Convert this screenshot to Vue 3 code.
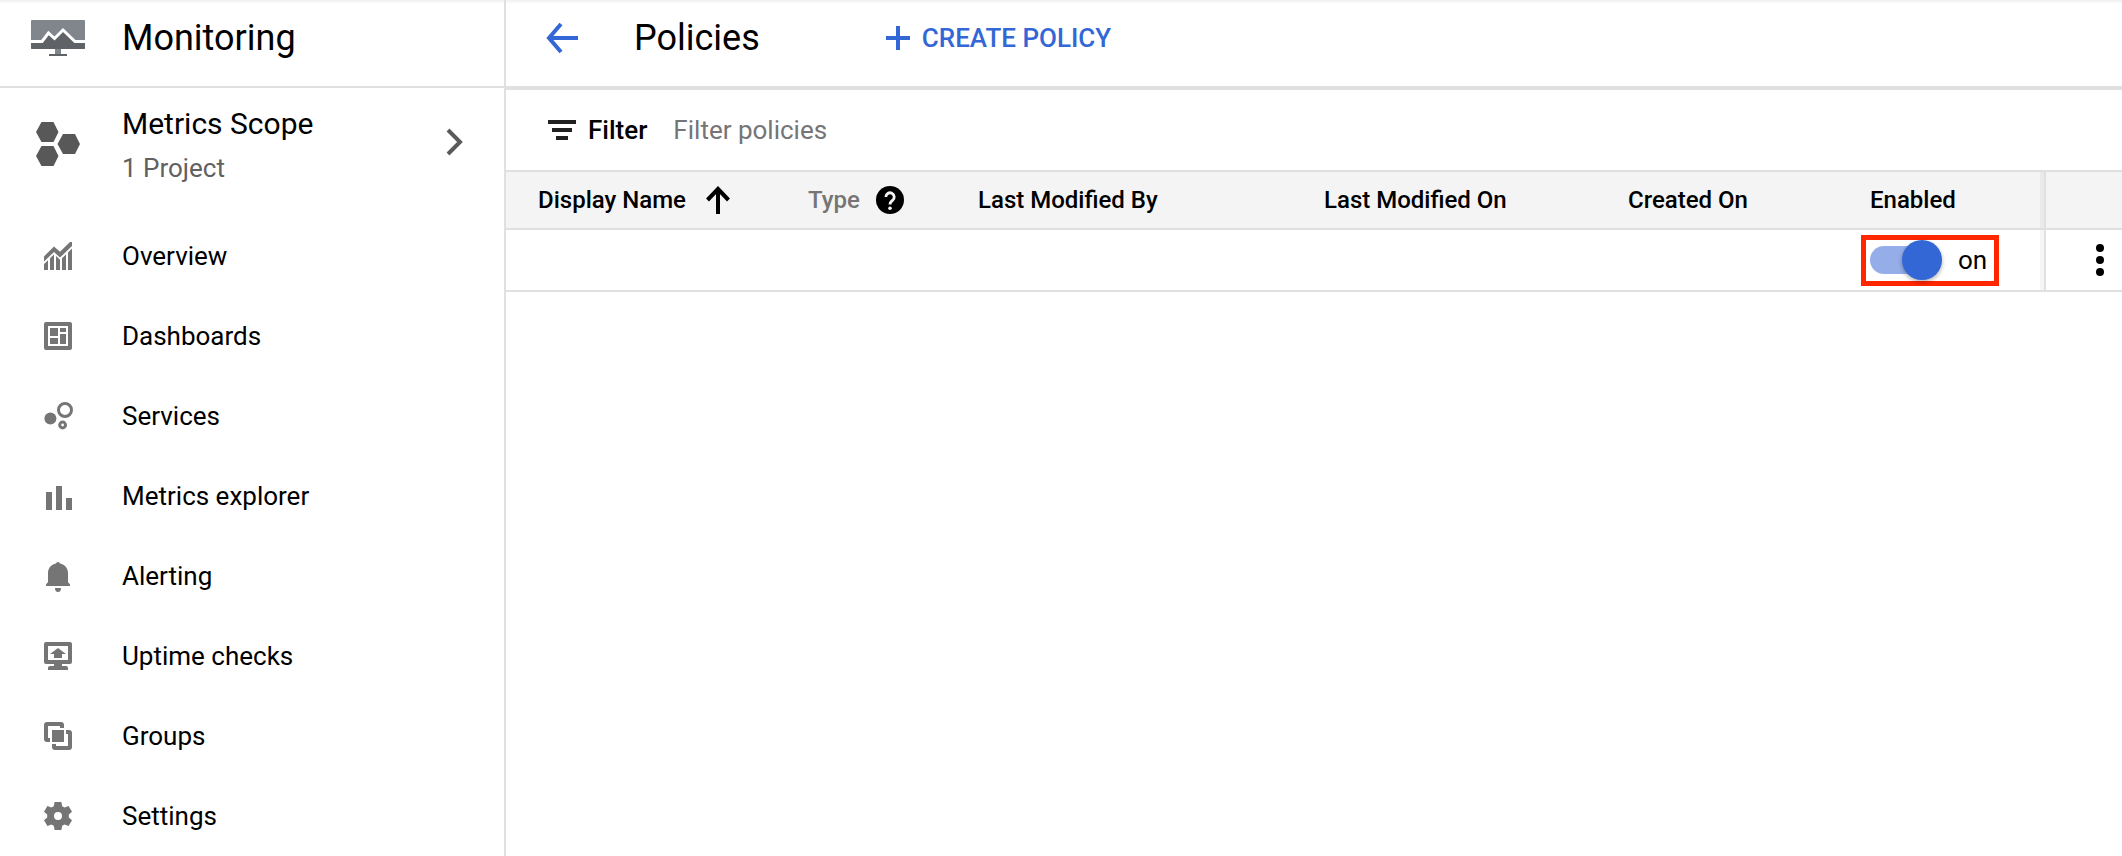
<script setup>
import { ref } from 'vue'

const enabled = ref(true)
const filterText = ref('')

const navItems = [
  {
    label: 'Overview',
    paths: [
      'M2 9.200 7 4.200l3 2.700L15 2h1v2l-6 5.800-3-2.800-5 4.800z',
      'M2 13l2-1.900V16H2zM5 10.100l2-1.900V16H5zM8 9l2 1.900V16H8zM11 10.100l2-1.900V16h-2zM14 7.200l2-1.900V16h-2z'
    ]
  },
  {
    label: 'Dashboards',
    paths: [
      'M3 2h12a1 1 0 0 1 1 1v12a1 1 0 0 1-1 1H3a1 1 0 0 1-1-1V3a1 1 0 0 1 1-1zM4 4v10h10V4z',
      'M5 5h4v4H5zM10 5h3v2h-3zM5 10h4v3H5zM10 8h3v5h-3z'
    ]
  },
  {
    label: 'Services',
    paths: [
      'M5.200 7.300a3 3 0 1 0 0 6 3 3 0 0 0 0-6z',
      'M12.500 2a4 4 0 1 0 0 8 4 4 0 0 0 0-8zm0 1.500a2.500 2.500 0 1 1 0 5 2.500 2.500 0 0 1 0-5z',
      'M11.300 11.300a2.200 2.200 0 1 0 0 4.400 2.200 2.200 0 0 0 0-4.400zm0 1.500a.7.7 0 1 1 0 1.400.7.7 0 0 1 0-1.400z'
    ]
  },
  { label: 'Metrics explorer', paths: ['M3 7h3v9H3zM8 4h3v12H8zM13 10h3v6h-3z'] },
  {
    label: 'Alerting',
    paths: [
      'M9 2a1 1 0 0 0-1 .8C5.500 3.300 4 5.200 4 7.500V12l-1 1.200V14h12v-.8L14 12V7.500c0-2.300-1.500-4.200-4-4.700A1 1 0 0 0 9 2z',
      'M7.500 15a1.500 2 0 0 0 3 0z'
    ]
  },
  {
    label: 'Uptime checks',
    paths: [
      'M3 2h12a1 1 0 0 1 1 1v9a1 1 0 0 1-1 1h-4v1h2a1 1 0 0 1 1 1v1H4v-1a1 1 0 0 1 1-1h2v-1H3a1 1 0 0 1-1-1V3a1 1 0 0 1 1-1zM4 4v7h10V4z',
      'M9 5l4 3h-2v2H7V8H5z'
    ]
  },
  {
    label: 'Groups',
    paths: [
      'M3.500 2H10.500A1.500 1.500 0 0 1 12 3.500V5h-2V4H4v6h1v2H3.500A1.500 1.500 0 0 1 2 10.500v-7A1.500 1.500 0 0 1 3.500 2z',
      'M13 6h1.500A1.500 1.500 0 0 1 16 7.500v7a1.500 1.500 0 0 1-1.500 1.500h-7A1.500 1.500 0 0 1 6 14.500V13h2v1h6V8h-1z',
      'M6 6h6v6H6z'
    ]
  },
  {
    label: 'Settings',
    paths: [
      'M7.300 2h3.400l.4 2.100 1.200.7 2-.8 1.700 2.900-1.600 1.400v1.400l1.600 1.400-1.700 2.900-2-.8-1.200.7-.4 2.100H7.300l-.4-2.100-1.200-.7-2 .8L2 11.100l1.600-1.400V8.300L2 6.900 3.700 4l2 .8 1.200-.7zM9 7a2 2 0 1 0 0 4 2 2 0 0 0 0-4z'
    ]
  }
]
</script>

<template>
  <div class="app">
    <aside class="sidebar">
      <header class="brand">
        <svg class="brand-icon" viewBox="0 0 54 36" aria-hidden="true">
          <rect width="54" height="29" rx="1" fill="#80868b" />
          <path d="M0 22h11l6-8 6 5 9-9 13 12h9v6a1 1 0 0 1-1 1H1a1 1 0 0 1-1-1z" fill="#5f6368" />
          <path d="M0 21.500h11l6.500-8.500 6 5.500 8.500-8.500 12 11.500h10" fill="none" stroke="#fff" stroke-width="3" />
          <path d="M24 29h6v5h-6z" fill="#80868b" />
          <path d="M18 34h18v2H18z" fill="#5f6368" />
        </svg>
        <h1>Monitoring</h1>
      </header>

      <button class="scope" type="button">
        <svg class="scope-icon" viewBox="0 0 44 44" aria-hidden="true">
          <path d="M5.500 0h12l5 10-5 10h-12L0 10zM5.500 24h12l5 10-5 10h-12L0 34zM27 12h12l5 10-5 10H27l-5.500-10z" fill="#585858" />
        </svg>
        <span class="scope-text">
          <span class="scope-title">Metrics Scope</span>
          <span class="scope-sub">1 Project</span>
        </span>
        <svg class="chevron" viewBox="0 0 18 32" aria-hidden="true">
          <path d="M2 2l12 12L2 26" fill="none" stroke="#5a5a5a" stroke-width="4" />
        </svg>
      </button>

      <nav class="nav" aria-label="Monitoring">
        <a v-for="item in navItems" :key="item.label" class="nav-item" href="#">
          <svg class="nav-icon" viewBox="0 0 18 18" aria-hidden="true">
            <path v-for="d in item.paths" :key="d" :d="d" fill-rule="evenodd" />
          </svg>
          <span>{{ item.label }}</span>
        </a>
      </nav>
    </aside>

    <main class="main">
      <header class="toolbar">
        <button class="back" type="button" aria-label="Back">
          <svg viewBox="0 0 32 32" aria-hidden="true">
            <path d="M15 2L3 16l12 14M3 16h29" fill="none" stroke="#3367d6" stroke-width="4" />
          </svg>
        </button>
        <h2>Policies</h2>
        <button class="create" type="button">
          <svg viewBox="0 0 24 24" aria-hidden="true">
            <path d="M10 0h4v10h10v4H14v10h-4V14H0v-4h10z" fill="#3367d6" />
          </svg>
          <span>CREATE POLICY</span>
        </button>
      </header>

      <div class="filter">
        <svg viewBox="0 0 28 20" aria-hidden="true">
          <path d="M0 0h28v4H0zM4 8h20v4H4zM8 16h12v4H8z" fill="#212121" />
        </svg>
        <label for="policy-filter">Filter</label>
        <input id="policy-filter" v-model="filterText" type="text" placeholder="Filter policies" />
      </div>

      <table class="policies">
        <colgroup>
          <col class="c-name" />
          <col class="c-type" />
          <col class="c-by" />
          <col class="c-on" />
          <col class="c-created" />
          <col class="c-enabled" />
          <col class="c-menu" />
        </colgroup>
        <thead>
          <tr>
            <th scope="col">
              <span class="head">
                Display Name
                <svg class="sort" viewBox="0 0 24 28" aria-hidden="true">
                  <path d="M12 28V3M1.500 14L12 3l10.500 11" fill="none" stroke="#000" stroke-width="4" />
                </svg>
              </span>
            </th>
            <th scope="col" class="muted">
              <span class="head type">
                Type
                <svg class="help" viewBox="0 0 28 28" aria-hidden="true">
                  <circle cx="14" cy="14" r="14" fill="#000" />
                  <path d="M9.800 11a4.200 4.200 0 1 1 6.800 3.300c-1.700 1.300-2.600 1.900-2.600 4.200" fill="none" stroke="#f4f4f4" stroke-width="2.800" />
                  <circle cx="14" cy="22.300" r="1.800" fill="#f4f4f4" />
                </svg>
              </span>
            </th>
            <th scope="col">Last Modified By</th>
            <th scope="col">Last Modified On</th>
            <th scope="col">Created On</th>
            <th scope="col" class="edge">Enabled</th>
            <th scope="col" class="menu-cell" aria-label="Actions"></th>
          </tr>
        </thead>
        <tbody>
          <tr>
            <td></td>
            <td></td>
            <td></td>
            <td></td>
            <td></td>
            <td class="edge enabled-cell">
              <label class="toggle">
                <input v-model="enabled" type="checkbox" role="switch" />
                <span>{{ enabled ? 'on' : 'off' }}</span>
              </label>
            </td>
            <td class="menu-cell">
              <button class="more" type="button" aria-label="More actions">
                <svg viewBox="0 0 8 32" aria-hidden="true">
                  <circle cx="4" cy="4" r="4" />
                  <circle cx="4" cy="16" r="4" />
                  <circle cx="4" cy="28" r="4" />
                </svg>
              </button>
            </td>
          </tr>
        </tbody>
      </table>
    </main>
  </div>
</template>

<style>
body {
  margin: 0;
  background: #fff;
}
</style>

<style scoped>
.app {
  display: flex;
  min-height: 100vh;
  font-family: Roboto, "Liberation Sans", sans-serif;
  font-size: 26px;
  color: #000;
  background: linear-gradient(#f0f0f0, #fff 4px);
}

.app *,
.app *::before {
  box-sizing: border-box;
}

button {
  padding: 0;
  border: 0;
  background: none;
  color: inherit;
  font: inherit;
  text-align: left;
  cursor: pointer;
}

svg {
  display: block;
  flex: none;
}

h1,
h2 {
  margin: 0;
  font-size: 36px;
  font-weight: 400;
  line-height: 44px;
}

.sidebar {
  flex: none;
  width: 506px;
  border-right: 2px solid #e0e0e0;
}

.brand {
  display: flex;
  align-items: center;
  height: 88px;
  padding: 0 0 10px 31px;
  border-bottom: 2px solid #e0e0e0;
}

.brand-icon {
  width: 54px;
  height: 36px;
  margin-right: 37px;
}

.scope {
  display: flex;
  align-items: center;
  width: 100%;
  height: 112px;
  padding: 0 40px 0 36px;
}

.scope-icon {
  width: 44px;
  height: 44px;
  margin-right: 42px;
}

.scope-text {
  flex: 1;
  padding-top: 4px;
}

.scope-title,
.scope-sub {
  display: block;
}

.scope-title {
  font-size: 30px;
  line-height: 44px;
}

.scope-sub {
  line-height: 44px;
  color: #616161;
}

.chevron {
  width: 18px;
  height: 32px;
}

.nav {
  padding-top: 16px;
}

.nav-item {
  display: flex;
  align-items: center;
  height: 80px;
  padding-left: 40px;
  color: inherit;
  text-decoration: none;
}

.nav-icon {
  width: 36px;
  height: 36px;
  margin-right: 46px;
  fill: #757575;
}

.main {
  flex: 1;
  min-width: 0;
}

.toolbar {
  display: flex;
  align-items: center;
  height: 90px;
  padding: 0 0 10px 40px;
  border-bottom: 4px solid #e0e0e0;
}

.back svg {
  width: 32px;
  height: 32px;
}

h2 {
  margin-left: 56px;
}

.create {
  display: flex;
  align-items: center;
  gap: 12px;
  margin-left: 126px;
  color: #3367d6;
  font-weight: 500;
}

.create svg {
  width: 24px;
  height: 24px;
}

.filter {
  display: flex;
  align-items: center;
  height: 80px;
  padding: 0 42px;
}

.filter svg {
  width: 28px;
  height: 20px;
  margin-right: 12px;
}

.filter label {
  margin-right: 26px;
  font-weight: 500;
}

.filter input {
  flex: 1;
  min-width: 0;
  padding: 0;
  border: 0;
  outline: 0;
  background: none;
  color: inherit;
  font: inherit;
}

.filter input::placeholder {
  color: #757575;
  opacity: 1;
}

.policies {
  width: 100%;
  table-layout: fixed;
  border-collapse: separate;
  border-spacing: 0;
}

.c-name { width: 270px; }
.c-type { width: 170px; }
.c-by { width: 346px; }
.c-on { width: 304px; }
.c-created { width: 242px; }
.c-enabled { width: 206px; }
.c-menu { width: 78px; }

th {
  height: 60px;
  padding: 0 0 0 32px;
  border-top: 2px solid #e0e0e0;
  border-bottom: 2px solid #e0e0e0;
  background: #f4f4f4;
  font-size: 24px;
  font-weight: 500;
  text-align: left;
  white-space: nowrap;
}

td {
  height: 62px;
  padding: 0;
  border-bottom: 2px solid #e0e0e0;
}

.muted {
  color: #757575;
}

.edge {
  box-shadow: inset -4px 0 rgba(0, 0, 0, 0.04);
}

.head {
  display: flex;
  align-items: center;
  gap: 20px;
}

.head.type {
  gap: 16px;
}

.sort {
  width: 24px;
  height: 28px;
}

.help {
  width: 28px;
  height: 28px;
}

.menu-cell {
  padding: 0;
  border-left: 2px solid #e0e0e0;
}

.enabled-cell {
  padding-left: 23px;
}

.toggle {
  display: flex;
  align-items: center;
  gap: 28px;
  width: 138px;
  height: 51px;
  padding-left: 4px;
  border: 5px solid #ff2600;
  cursor: pointer;
}

.toggle input {
  position: relative;
  flex: none;
  width: 60px;
  height: 28px;
  margin: 0;
  border-radius: 14px;
  background: #bdbdbd;
  appearance: none;
  cursor: pointer;
}

.toggle input::before {
  content: "";
  position: absolute;
  top: -6px;
  left: -8px;
  width: 40px;
  height: 40px;
  border-radius: 50%;
  background: #fff;
  box-shadow: 0 2px 4px rgba(0, 0, 0, 0.3);
}

.toggle input:checked {
  background: #95ade8;
}

.toggle input:checked::before {
  left: 32px;
  background: #3367d6;
}

.more {
  display: block;
  margin-left: 50px;
}

.more svg {
  width: 8px;
  height: 32px;
}
</style>
